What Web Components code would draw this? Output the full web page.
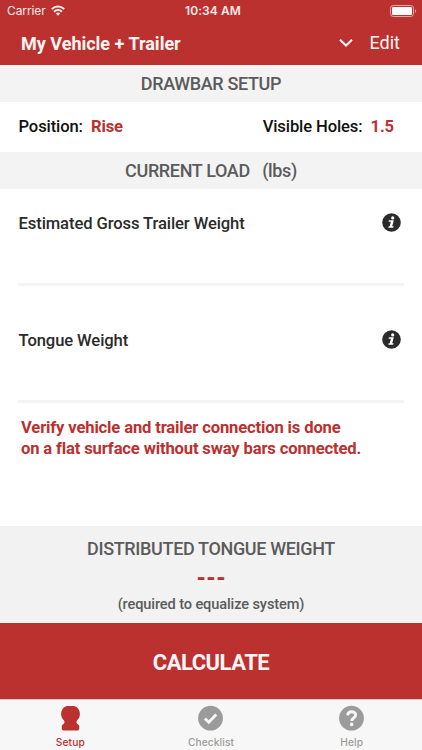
<!DOCTYPE html>
<html lang="en">
<head>
<meta charset="utf-8">
<meta name="viewport" content="width=device-width, initial-scale=1">
<title>Drawbar Setup</title>
<style>
  body {
    margin: 0;
    font-family: Roboto, "Liberation Sans", sans-serif;
    --red: #bb3130;
    --band: #f3f3f3;
    --gray: #5b5b5b;
  }
</style>
</head>
<body>
<setup-screen></setup-screen>

<script>
class StatusBar extends HTMLElement {
  constructor() {
    super();
    this.attachShadow({ mode: 'open' });
    this.shadowRoot.innerHTML = `
      <style>
        :host {
          display: grid;
          grid-template-columns: 1fr auto 1fr;
          align-items: center;
          height: 21px;
          padding: 0 5px 0 7px;
          box-sizing: border-box;
          font: 12px Inter, "Liberation Sans", sans-serif;
          color: #fbe9e8;
        }
        .carrier { display: flex; align-items: center; gap: 5px; letter-spacing: -0.1px; }
        .time { font-weight: 600; letter-spacing: 0.1px; padding-left: 2px; }
        .battery { justify-self: end; }
        svg { display: block; }
      </style>
      <div class="carrier">
        <span>Carrier</span>
        <svg width="14" height="11" viewBox="0 0 14 11" fill="none" stroke="currentColor" stroke-width="2">
          <path d="M.8 4.1a8.8 8.8 0 0 1 12.4 0M3.1 6.7a5.5 5.5 0 0 1 7.8 0"/>
          <path d="M7 10.8 4.8 8.5a3.1 3.1 0 0 1 4.4 0z" fill="currentColor" stroke="none"/>
        </svg>
      </div>
      <span class="time">10:34 AM</span>
      <svg class="battery" width="27" height="12" viewBox="0 0 27 12">
        <rect x=".5" y=".5" width="23" height="11" rx="2.8" fill="none" stroke="#e3a6a5"/>
        <rect x="2" y="2" width="20" height="8" rx="1.3" fill="#fff"/>
        <path d="M25 4.2c1.6.5 1.6 3.1 0 3.6z" fill="#e3a6a5"/>
      </svg>
    `;
  }
}
customElements.define('status-bar', StatusBar);

class VehicleHeader extends HTMLElement {
  constructor() {
    super();
    this.attachShadow({ mode: 'open' });
    this.shadowRoot.innerHTML = `
      <style>
        :host {
          display: block;
          height: 65px;
          background: var(--red);
          color: #fff5f4;
        }
        .row {
          display: flex;
          align-items: center;
          height: 44px;
          padding: 0 22px 0 21px;
        }
        .title { flex: 1; font-size: 18px; font-weight: 700; }
        .edit { margin-left: 17px; padding-bottom: 1px; font-size: 18px; }
      </style>
      <status-bar></status-bar>
      <div class="row">
        <span class="title"><slot></slot></span>
        <svg width="14" height="10" viewBox="0 0 14 10" fill="none" stroke="currentColor" stroke-width="2.1">
          <path d="M1 1.8 7 7.6l6-5.8"/>
        </svg>
        <span class="edit">Edit</span>
      </div>
    `;
  }
}
customElements.define('vehicle-header', VehicleHeader);

class SectionBand extends HTMLElement {
  constructor() {
    super();
    this.attachShadow({ mode: 'open' });
    this.shadowRoot.innerHTML = `
      <style>
        :host {
          display: flex;
          align-items: center;
          justify-content: center;
          height: 37px;
          background: var(--band);
          color: var(--gray);
          font-size: 18px;
          letter-spacing: -0.35px;
          font-weight: 500;
          white-space: pre;
        }
      </style>
      <span><slot></slot></span>
    `;
  }
}
customElements.define('section-band', SectionBand);

class SetupValue extends HTMLElement {
  constructor() {
    super();
    this.attachShadow({ mode: 'open' });
    this.shadowRoot.innerHTML = `
      <style>
        :host {
          display: flex;
          gap: 8px;
          font-size: 16.6px;
          letter-spacing: -0.12px;
          font-weight: 500;
          color: #111;
        }
        .value { color: var(--red); font-weight: 700; }
      </style>
      <span>${this.getAttribute('label')}</span>
      <span class="value"><slot></slot></span>
    `;
  }
}
customElements.define('setup-value', SetupValue);

// Label with an info button above an empty, underlined input area
class WeightField extends HTMLElement {
  constructor() {
    super();
    this.attachShadow({ mode: 'open' });
    this.shadowRoot.innerHTML = `
      <style>
        :host {
          display: block;
          height: 70px;
          margin: 0 18px;
          border-bottom: 3px solid #f4f4f4;
          color: #2b2b2b;
        }
        .head {
          display: flex;
          align-items: center;
          justify-content: space-between;
          height: 19px;
          padding: 0 3px 0 0.5px;
          font-size: 16.6px;
          letter-spacing: -0.1px;
          font-weight: 500;
        }
        .label { line-height: 19px; padding-top: 1px; }
      </style>
      <div class="head">
        <span class="label"><slot></slot></span>
        <svg width="19" height="19" viewBox="0 0 19 19">
          <circle cx="9.5" cy="9.5" r="9.3" fill="#2b2b2b"/>
          <circle cx="10.7" cy="4.9" r="1.6" fill="#fff"/>
          <path d="M6.9 7.3h4.9l-1.6 5.9h1.4l-.4 1.5H6.3l.4-1.5h1l1.2-4.4H6.5z" fill="#fff"/>
        </svg>
      </div>
    `;
  }
}
customElements.define('weight-field', WeightField);

class ResultPanel extends HTMLElement {
  constructor() {
    super();
    this.attachShadow({ mode: 'open' });
    this.shadowRoot.innerHTML = `
      <style>
        :host {
          display: flex;
          flex-direction: column;
          align-items: center;
          height: 97px;
          padding-top: 12px;
          box-sizing: border-box;
          background: #f2f2f2;
          color: var(--gray);
        }
        .title { font-size: 18px; letter-spacing: -0.35px; line-height: 22px; font-weight: 500; }
        .value { font-size: 22px; line-height: 34px; padding-top: 1px; margin-bottom: -1px; font-weight: 900; color: var(--red); }
        .note { font-size: 14.6px; letter-spacing: -0.12px; line-height: 20px; font-weight: 500; }
      </style>
      <span class="title">DISTRIBUTED TONGUE WEIGHT</span>
      <span class="value"><slot></slot></span>
      <span class="note">(required to equalize system)</span>
    `;
  }
}
customElements.define('result-panel', ResultPanel);

class CalculateButton extends HTMLElement {
  constructor() {
    super();
    this.attachShadow({ mode: 'open' });
    this.shadowRoot.innerHTML = `
      <style>
        :host { display: block; height: 76px; }
        button {
          display: block;
          width: 100%;
          height: 100%;
          border: none;
          padding: 2px 0 0;
          background: var(--red);
          color: #fff5f4;
          font: inherit;
          font-size: 22px;
          letter-spacing: -0.5px;
          font-weight: 700;
          cursor: pointer;
        }
      </style>
      <button><slot></slot></button>
    `;
  }
}
customElements.define('calculate-button', CalculateButton);

const TAB_ICONS = {
  setup: '<path d="M9 1h7c3.5.9 5.9 4 5.9 8 0 3-1.2 4.8-2.700 6.300-.9.900-.9 2.600 0 3.400.8.700 2 1 2 2.200v2.800c0 1.300-1.300 1.900-3.100 1.900H6.900c-1.800 0-3.100-.6-3.100-1.900v-2.800c0-1.200 1.200-1.500 2-2.200.9-.8.900-2.500 0-3.400C4.300 13.800 3.100 12 3.100 9c0-4 2.400-7.100 5.900-8z" fill="currentColor"/>',
  checklist: '<circle cx="12.5" cy="13.2" r="12.4" fill="currentColor"/><path d="m6.9 13.5 3.9 3.8 7.4-7.8" fill="none" stroke="#f7f7f7" stroke-width="2.9"/>',
  help: '<circle cx="12.5" cy="13.2" r="12.4" fill="currentColor"/><path d="M8.7 10.3c.3-4.7 8-4.6 8-.3 0 2.8-3.9 2.7-3.9 6" fill="none" stroke="#f7f7f7" stroke-width="2.9"/><circle cx="12.7" cy="19.4" r="1.8" fill="#f7f7f7"/>'
};

class TabItem extends HTMLElement {
  constructor() {
    super();
    this.attachShadow({ mode: 'open' });
    this.shadowRoot.innerHTML = `
      <style>
        :host {
          display: flex;
          flex-direction: column;
          align-items: center;
          padding-top: 5px;
          color: #9b9b9b;
          font: 500 10.2px/13px Inter, "Liberation Sans", sans-serif;
          letter-spacing: 0.1px;
        }
        :host([active]) { color: var(--red); }
        svg { display: block; margin-bottom: 5px; }
      </style>
      <svg width="25" height="26" viewBox="0 0 25 26">${TAB_ICONS[this.getAttribute('icon')]}</svg>
      <span><slot></slot></span>
    `;
  }
}
customElements.define('tab-item', TabItem);

class TabBar extends HTMLElement {
  constructor() {
    super();
    this.attachShadow({ mode: 'open' });
    this.shadowRoot.innerHTML = `
      <style>
        :host {
          display: grid;
          grid-template-columns: repeat(3, 1fr);
          height: 51px;
          box-sizing: border-box;
          border-top: 1px solid #dcc6c6;
          background: #f7f7f7;
        }
      </style>
      <slot></slot>
    `;
  }
}
customElements.define('tab-bar', TabBar);

class SetupScreen extends HTMLElement {
  constructor() {
    super();
    this.attachShadow({ mode: 'open' });
    this.shadowRoot.innerHTML = `
      <style>
        :host {
          display: flex;
          flex-direction: column;
          width: 422px;
          height: 750px;
          overflow: hidden;
          background: #fff;
        }
        .values {
          display: flex;
          align-items: center;
          justify-content: space-between;
          height: 50px;
          padding: 0 28px 1px 18.5px;
          box-sizing: border-box;
        }
        .fields {
          display: flex;
          flex-direction: column;
          gap: 44px;
          padding-top: 24px;
        }
        .warning {
          flex: 1;
          margin: 0;
          padding: 14px 20px 0 21px;
          font-size: 16.6px;
          letter-spacing: -0.15px;
          line-height: 21px;
          font-weight: 700;
          color: var(--red);
        }
      </style>
      <vehicle-header>My Vehicle + Trailer</vehicle-header>
      <section-band>DRAWBAR SETUP</section-band>
      <div class="values">
        <setup-value label="Position:">Rise</setup-value>
        <setup-value label="Visible Holes:">1.5</setup-value>
      </div>
      <section-band>CURRENT LOAD   (lbs)</section-band>
      <div class="fields">
        <weight-field>Estimated Gross Trailer Weight</weight-field>
        <weight-field>Tongue Weight</weight-field>
      </div>
      <p class="warning">Verify vehicle and trailer connection is done<br>on a flat surface without sway bars connected.</p>
      <result-panel>---</result-panel>
      <calculate-button>CALCULATE</calculate-button>
      <tab-bar>
        <tab-item icon="setup" active>Setup</tab-item>
        <tab-item icon="checklist">Checklist</tab-item>
        <tab-item icon="help">Help</tab-item>
      </tab-bar>
    `;
  }
}
customElements.define('setup-screen', SetupScreen);
</script>
</body>
</html>
